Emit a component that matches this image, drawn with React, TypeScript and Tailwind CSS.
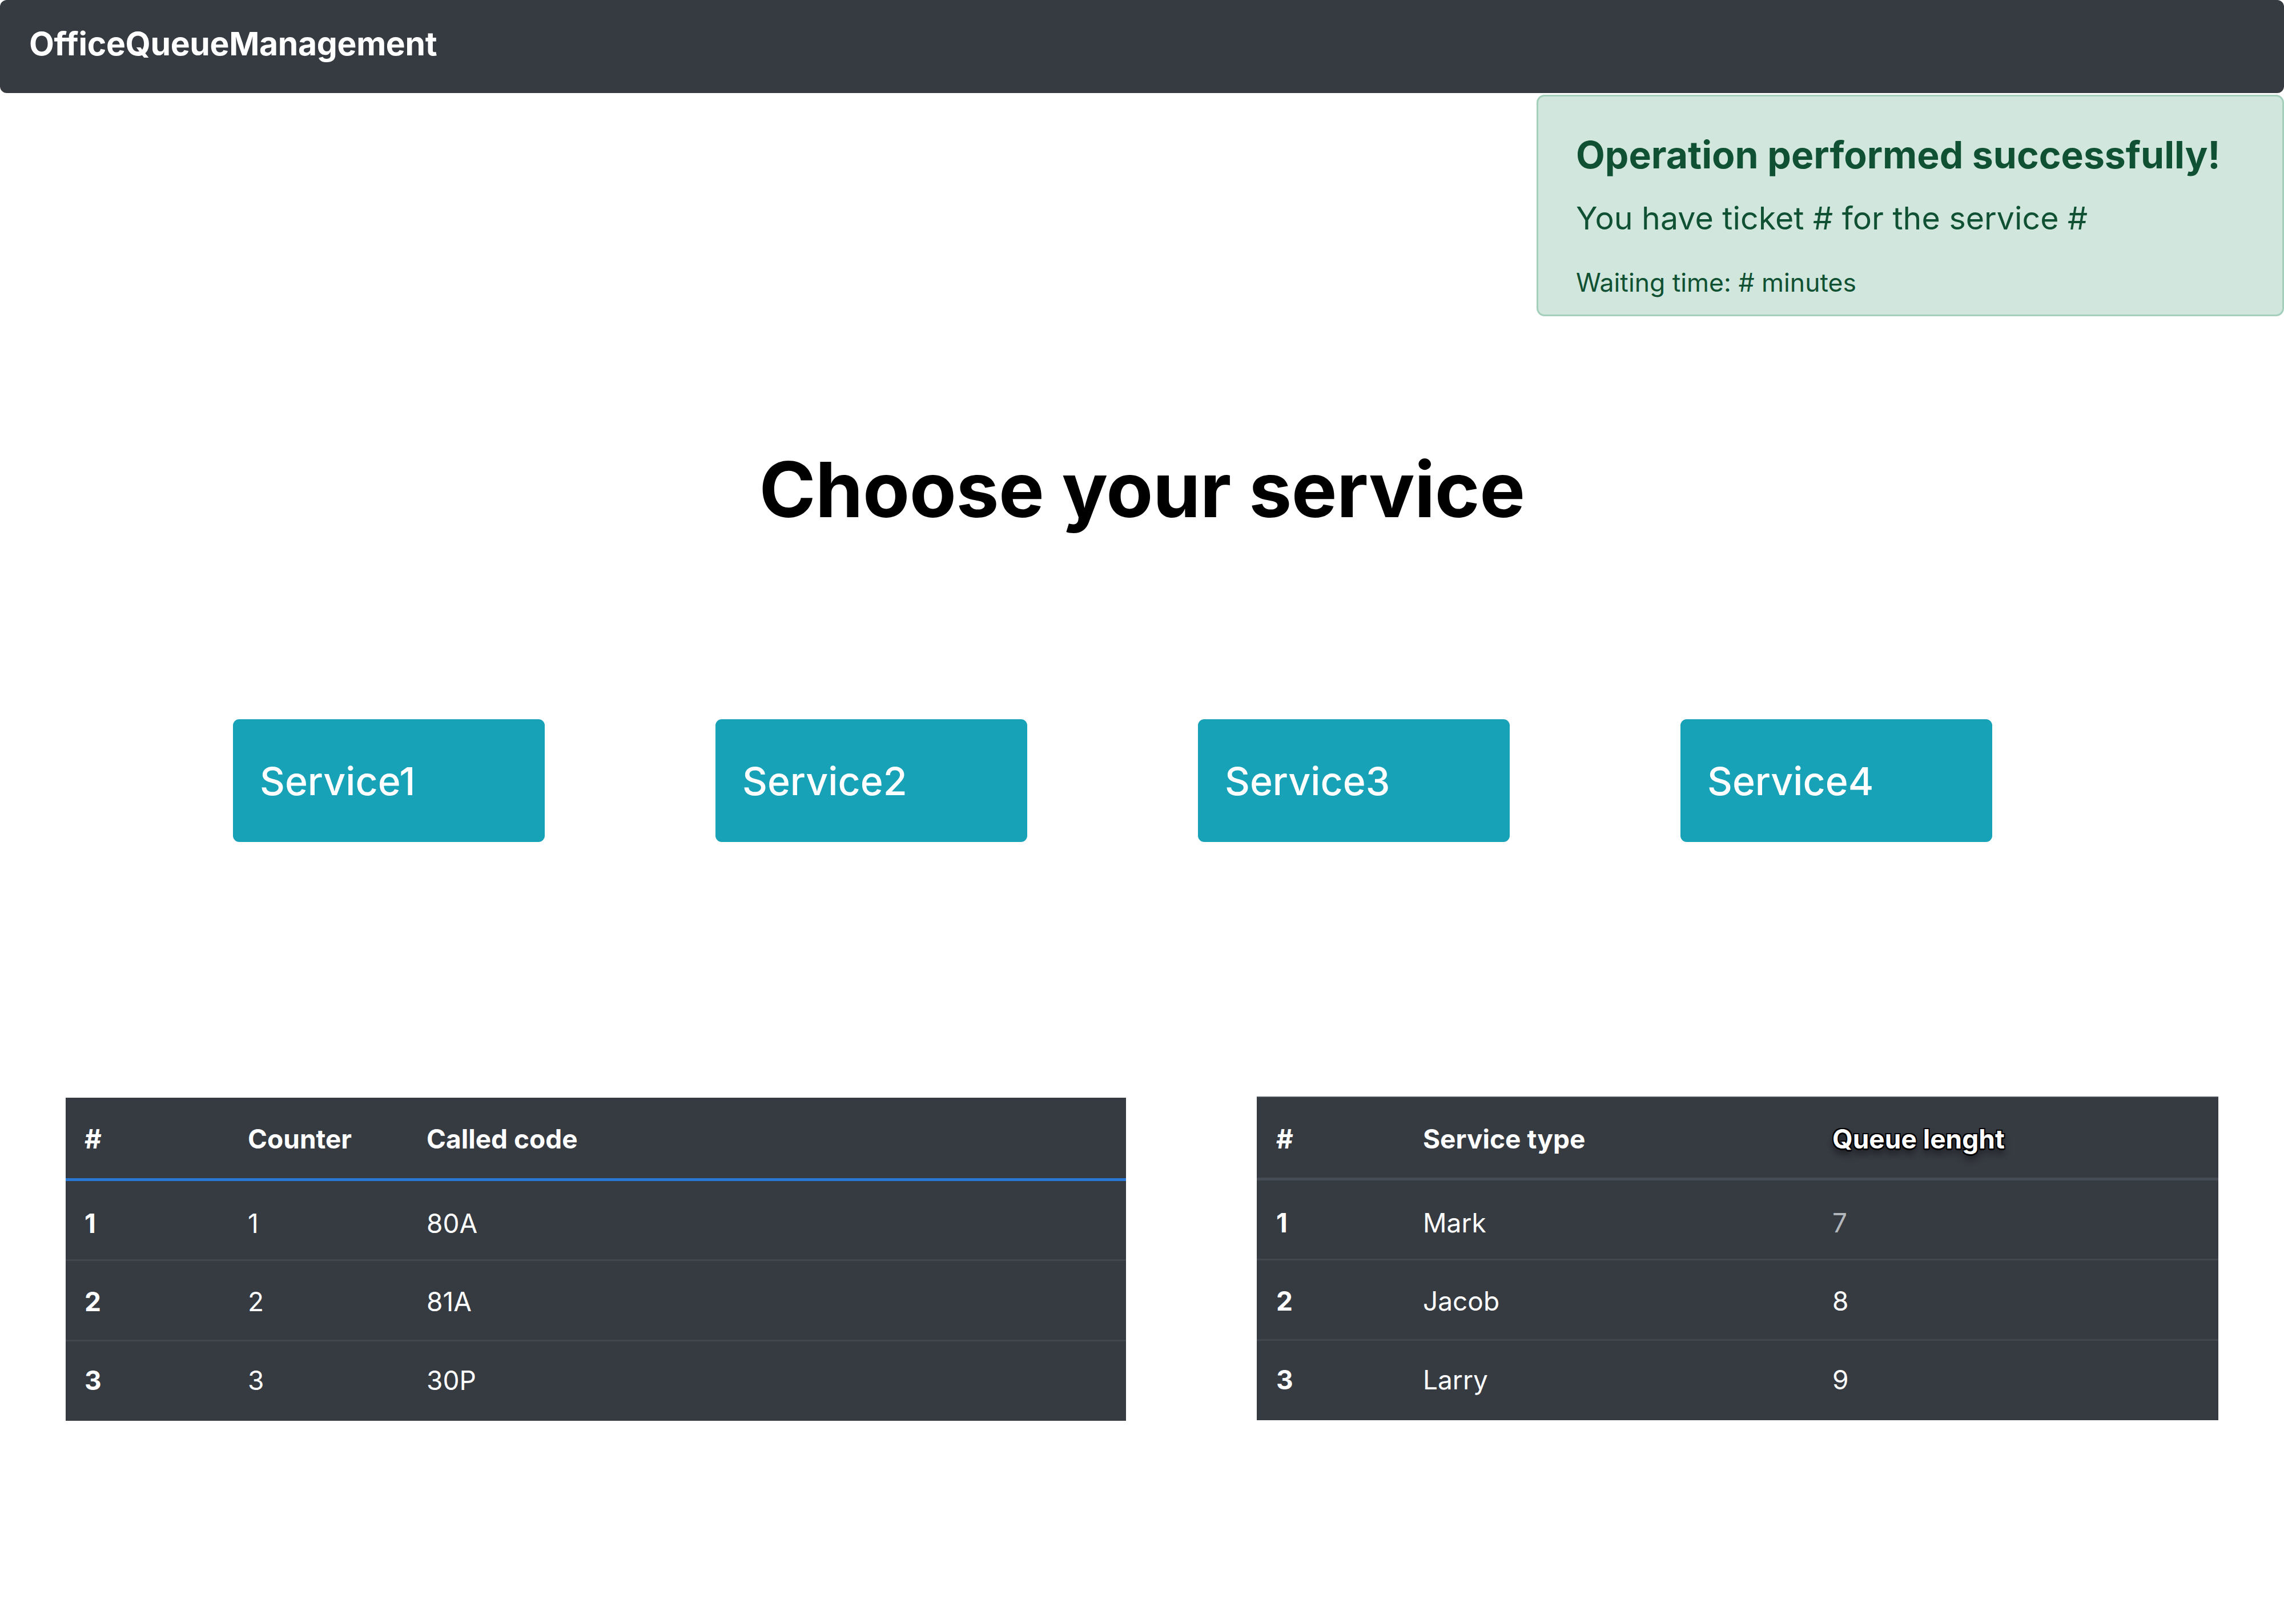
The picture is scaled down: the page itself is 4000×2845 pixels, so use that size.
import React from 'react'

const services = ['Service1', 'Service2', 'Service3', 'Service4']

const calls = [
  { id: 1, counter: '1', code: '80A' },
  { id: 2, counter: '2', code: '81A' },
  { id: 3, counter: '3', code: '30P' },
]

const queues = [
  { id: 1, type: 'Mark', length: '7', muted: true },
  { id: 2, type: 'Jacob', length: '8', muted: false },
  { id: 3, type: 'Larry', length: '9', muted: false },
]

// small per-row nudge so the text sits where it does in the design
const rowPad = ['pt-[12px]', 'pt-[6px]', 'pb-[2px]']

const App = () => {
  return (
    <div className="min-h-screen bg-white font-['Inter',sans-serif] text-black">
      {/* NAVBAR */}
      <nav className="h-[163px] w-full rounded-[12px] bg-[#363a41] flex items-center pl-[51px] pb-[10px]">
        <span className="text-[57px] font-bold text-white leading-none tracking-[-0.3px]">
          OfficeQueueManagement
        </span>
      </nav>

      {/* ALERT */}
      <div className="flex justify-end mt-[3px]">
        <div className="w-[1309px] h-[388px] rounded-[14px] border-[3px] border-[#a3cfbb] bg-[#d1e7dd] text-[#0f5132] pl-[66px] pt-[63px]">
          <h4 className="text-[66px] font-bold leading-[79px]">
            Operation performed successfully!
          </h4>
          <p className="mt-[28px] text-[55.5px] leading-[86px]">
            You have ticket # for the service #
          </p>
          <p className="mt-[36px] text-[44.5px] leading-[69px]">
            Waiting time: # minutes
          </p>
        </div>
      </div>

      {/* TITLE */}
      <h1 className="mt-[221px] text-center text-[134px] font-bold leading-[164px] tracking-[-0.5px]">
        Choose your service
      </h1>

      {/* SERVICES */}
      <div className="mt-[321px] flex pl-[408px] gap-[299px]">
        {services.map((s) => (
          <button
            key={s}
            className="w-[546px] h-[215px] rounded-[11px] bg-[#17a2b8] text-white text-[68px] font-medium text-left pl-[47px] flex items-center"
          >
            {s}
          </button>
        ))}
      </div>

      {/* TABLES */}
      <div className="mt-[446px] flex items-start pl-[115px] gap-[229px] pb-[300px]">
        <table className="mt-[2px] w-[1857px] border-collapse bg-[#363a41] text-white text-[46px] leading-[69px]">
          <thead>
            <tr className="h-[143px] border-b-[5px] border-[#2a78d6]">
              <th className="w-[319px] pl-[33px] pt-[5px] text-left font-bold">#</th>
              <th className="w-[313px] pt-[5px] text-left font-bold">Counter</th>
              <th className="pt-[5px] text-left font-bold">Called code</th>
            </tr>
          </thead>
          <tbody>
            {calls.map((c, i) => (
              <tr
                key={c.id}
                className={i < calls.length - 1 ? 'h-[141px] border-b-[3px] border-[#41474f]' : 'h-[141px]'}
              >
                <th className={`pl-[33px] text-left font-bold ${rowPad[i]}`}>{c.id}</th>
                <td className={rowPad[i]}>{c.counter}</td>
                <td className={rowPad[i]}>{c.code}</td>
              </tr>
            ))}
          </tbody>
        </table>

        <table className="w-[1684px] border-collapse bg-[#363a41] text-white text-[46px] leading-[69px]">
          <thead>
            <tr className="h-[143px] border-t-[2px] border-b-[5px] border-[#454c55]">
              <th className="w-[291px] pl-[34px] pt-[5px] text-left font-bold">#</th>
              <th className="w-[717px] pt-[5px] text-left font-bold">Service type</th>
              <th className="pt-[5px] text-left font-bold [text-shadow:-2px_-2px_0_#000,2px_-2px_0_#000,-2px_2px_0_#000,2px_2px_0_#000,0_3px_0_#000,0_9px_12px_rgba(0,0,0,0.55)]">
                Queue lenght
              </th>
            </tr>
          </thead>
          <tbody>
            {queues.map((q, i) => (
              <tr
                key={q.id}
                className={i < queues.length - 1 ? 'h-[141px] border-b-[3px] border-[#41474f]' : 'h-[141px]'}
              >
                <th className={`pl-[34px] text-left font-bold ${rowPad[i]}`}>{q.id}</th>
                <td className={rowPad[i]}>{q.type}</td>
                <td className={q.muted ? `${rowPad[i]} text-[#b4b8bd]` : rowPad[i]}>{q.length}</td>
              </tr>
            ))}
          </tbody>
        </table>
      </div>
    </div>
  )
}

export default App
